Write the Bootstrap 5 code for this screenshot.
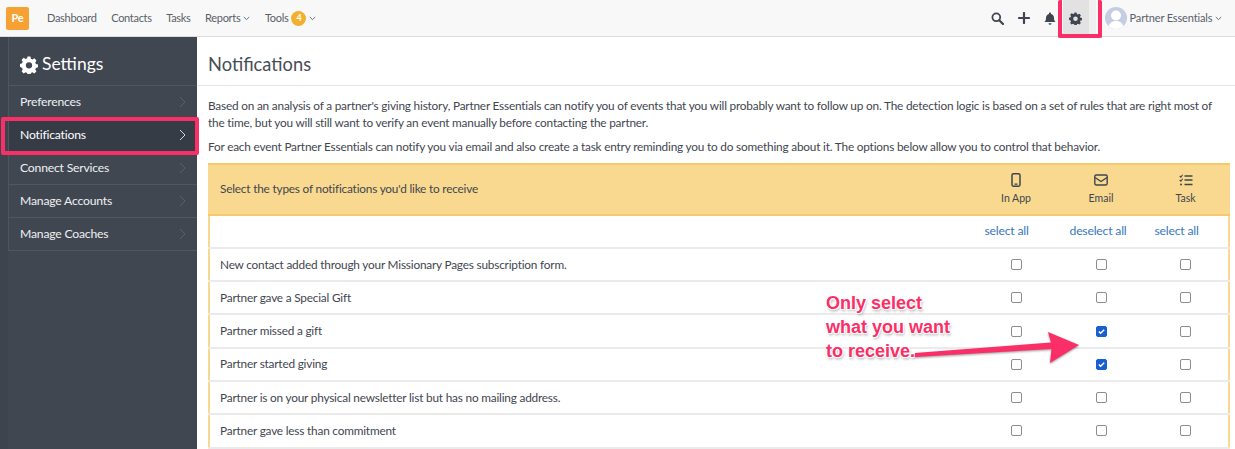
<!DOCTYPE html>
<html lang="en">
<head>
<meta charset="utf-8">
<title>Notifications</title>
<link href="https://cdn.jsdelivr.net/npm/bootstrap@5.3.0/dist/css/bootstrap.min.css" rel="stylesheet">
<style>
html,body{height:449px;overflow:hidden;}
body{font-family:Lato,"Noto Sans",sans-serif;font-size:11.8px;letter-spacing:-.19px;color:#3f4650;background:#fff;position:relative;}
.topbar{height:37px;background:#f8f8f8;border-bottom:1px solid #dcdcdc;padding:0 13px 0 6px;}
.logo-box{width:23px;height:23px;background:#f5a133;border-radius:2px;color:#fff;font-weight:700;font-size:11px;margin-right:18px;}
.top-link{color:#5a6068;font-size:11px;letter-spacing:-.3px;text-decoration:none;margin-right:14.5px;}
.top-link.wide-gap{margin-right:15px;}
.top-link.user-name{letter-spacing:-.15px;}
.count-pill{width:15px;height:15px;border-radius:50%;background:#f3b02e;color:#fff;font-size:9px;font-weight:700;margin:0 3px 0 3px;}
.tool-icon{width:26px;height:36px;color:#3f4650;}
.gear-cell{background:#e2e2e2;box-shadow:7px 0 0 #f0f0f0;margin-right:16px;}
.avatar{width:22px;height:22px;border-radius:50%;background:#c5cde2;overflow:hidden;margin-right:3px;}
.shell{height:412px;}
.side{width:197px;background:#404751;border-left:8px solid #3d444e;flex:none;}
.side-inner{border-left:1px solid #4d5560;}
.side-head{height:49px;color:#fff;font-size:17.5px;letter-spacing:0;padding:7px 0 0 11px;border-bottom:1px solid #4f5762;gap:4px;}
.side-item{height:33px;color:#eef0f2;font-size:12.2px;letter-spacing:-.2px;padding:0 11px;border-bottom:1px solid #4f5762;text-decoration:none;}
.side-item.on{background:#363c45;color:#fff;}
.main-pane{min-width:0;flex:1;}
.page-head{height:49px;border-bottom:1px solid #e6e6e6;padding:7px 0 0 11px;font-size:18.3px;letter-spacing:0;color:#474d55;}
.copy{padding:11px 5px 0 11px;line-height:17px;}
.copy p{margin:0 0 7px;}
.notify-table{margin:7.5px 5px 0 11px;border-collapse:collapse;width:1021.5px;table-layout:fixed;}
.notify-table td,.notify-table th{padding:0;border-bottom:2px solid #ebebeb;vertical-align:middle;font-weight:400;color:#3f4650;height:33.3px;}
.notify-table tr{border-left:2px solid #f8d98f;border-right:2px solid #f8d98f;}
.notify-table td:first-child{padding:0 0 0 10px;}
.notify-table thead th{background:#f8d98f;border-top:2px solid #f6c96b;border-bottom:2px solid #f6c96b;height:51px;}
.notify-table thead th:first-child{padding-left:10px;}
.notify-table thead th.col-mark{padding-top:2px;}
.col-mark{width:85px;text-align:center;}
.link-cell{text-align:left;padding-left:11px !important;}
.mark-label{display:block;font-size:10.5px;letter-spacing:0;margin-top:4px;}
.mark-svg{display:block;margin:0 auto;height:14px;}
.all-link{color:#3878c0;text-decoration:none;font-size:12.2px;letter-spacing:-.2px;}
.tick{appearance:none;display:block;margin:0 auto;width:11px;height:11px;border:1px solid #8d8d8d;border-radius:2px;background:#fff;}
.tick:checked{background:#1a5fd0;border-color:#1a5fd0;background-image:url("data:image/svg+xml,%3Csvg xmlns='http://www.w3.org/2000/svg' viewBox='0 0 10 10'%3E%3Cpath d='M2 5l2 2 4-4' fill='none' stroke='white' stroke-width='1.6'/%3E%3C/svg%3E");}
.hilite{position:absolute;border:4px solid #fb2f67;border-radius:2px;pointer-events:none;}
.hilite-nav{left:1058px;top:0;width:44px;height:38px;border-top:0;}
.hilite-side{left:1px;top:117px;width:198px;height:38px;}
.call-note{position:absolute;left:826px;top:291px;font:700 18px/24px "Liberation Sans",sans-serif;letter-spacing:0;color:#fb2f67;text-shadow:0 0 2px #fff,1px 1px 1px #fff,-1px -1px 1px #fff,1px -1px 1px #fff,-1px 1px 1px #fff,1px 2px 3px rgba(0,0,0,.4);white-space:nowrap;}
.call-arrow{position:absolute;left:905px;top:325px;filter:drop-shadow(0 1px 1px rgba(0,0,0,.4));}
</style>
</head>
<body>
<nav class="topbar d-flex align-items-center">
  <span class="logo-box d-flex align-items-center justify-content-center">Pe</span>
  <a class="top-link" href="#">Dashboard</a>
  <a class="top-link" href="#">Contacts</a>
  <a class="top-link" href="#">Tasks</a>
  <a class="top-link wide-gap" href="#">Reports <svg width="7" height="5" viewBox="0 0 7 5"><path d="M.8 1l2.7 2.6L6.2 1" fill="none" stroke="#6a7078"/></svg></a>
  <a class="top-link d-flex align-items-center" href="#">Tools <span class="count-pill d-flex align-items-center justify-content-center">4</span><svg width="7" height="5" viewBox="0 0 7 5"><path d="M.8 1l2.7 2.6L6.2 1" fill="none" stroke="#6a7078"/></svg></a>
  <span class="ms-auto tool-icon d-flex align-items-center justify-content-center">
    <svg width="13" height="13" viewBox="0 0 13 13"><circle cx="5.3" cy="5.3" r="3.9" fill="none" stroke="#3f4650" stroke-width="1.8"/><path d="M8.2 8.2l3.8 3.8" stroke="#3f4650" stroke-width="2.2" stroke-linecap="round"/></svg>
  </span>
  <span class="tool-icon d-flex align-items-center justify-content-center">
    <svg width="12" height="12" viewBox="0 0 12 12"><path d="M6 1v10M1 6h10" stroke="#3f4650" stroke-width="2.2" stroke-linecap="round"/></svg>
  </span>
  <span class="tool-icon d-flex align-items-center justify-content-center">
    <svg width="12" height="13" viewBox="0 0 12 13"><path d="M6 0.5c.6 0 1 .4 1 1v.4c2 .5 3 2 3 4 0 2.300.7 3.100 1.500 4H.5c.8-.9 1.500-1.700 1.500-4 0-2 1-3.500 3-4v-.4c0-.6.4-1 1-1zM4.500 11.200h3a1.500 1.500 0 0 1-3 0z" fill="#3f4650"/></svg>
  </span>
  <span class="tool-icon gear-cell d-flex align-items-center justify-content-center">
    <svg width="13" height="13" viewBox="0 0 16 16"><path fill-rule="evenodd" d="M6.700.5h2.600l.4 2 1.300.6 1.800-1 1.800 1.900-1 1.700.5 1.300 1.900.5v2.600l-1.900.5-.5 1.300 1 1.700-1.800 1.900-1.800-1-1.300.6-.4 2H6.700l-.4-2-1.300-.6-1.800 1-1.800-1.900 1-1.700-.5-1.300L0 9.600V7l1.900-.5.5-1.300-1-1.700L3.200 1.600l1.800 1 1.300-.6zM8 5.500a2.800 2.800 0 1 0 0 5.600 2.800 2.800 0 0 0 0-5.600z" fill="#3f4650"/></svg>
  </span>
  <span class="avatar"><svg width="22" height="22" viewBox="0 0 22 22"><circle cx="11" cy="8.500" r="5" fill="#fff"/><path d="M3 23c0-6 3.500-9 8-9s8 3 8 9z" fill="#fff"/></svg></span>
  <span class="top-link user-name m-0">Partner Essentials <svg width="7" height="5" viewBox="0 0 7 5"><path d="M.8 1l2.700 2.600L6.200 1" fill="none" stroke="#6a7078"/></svg></span>
</nav>
<div class="shell d-flex">
  <aside class="side">
    <div class="side-inner">
      <div class="side-head d-flex align-items-center">
        <svg width="18" height="18" viewBox="0 0 16 16"><path fill-rule="evenodd" d="M6.700.5h2.600l.4 2 1.300.6 1.800-1 1.800 1.900-1 1.700.5 1.300 1.900.5v2.600l-1.900.5-.5 1.300 1 1.700-1.800 1.900-1.800-1-1.300.6-.4 2H6.700l-.4-2-1.300-.6-1.800 1-1.800-1.900 1-1.700-.5-1.300L0 9.600V7l1.900-.5.5-1.300-1-1.700L3.200 1.600l1.800 1 1.300-.6zM8 5.500a2.800 2.800 0 1 0 0 5.600 2.800 2.800 0 0 0 0-5.600z" fill="#fff"/></svg>
        Settings
      </div>
      <a class="side-item d-flex align-items-center justify-content-between" href="#">Preferences <svg width="7" height="12" viewBox="0 0 7 12"><path d="M1 1l5 5-5 5" fill="none" stroke="#58606b" stroke-width="1"/></svg></a>
      <a class="side-item on d-flex align-items-center justify-content-between" href="#">Notifications <svg width="7" height="12" viewBox="0 0 7 12"><path d="M1 1l5 5-5 5" fill="none" stroke="#d5d8dc" stroke-width="1"/></svg></a>
      <a class="side-item d-flex align-items-center justify-content-between" href="#">Connect Services <svg width="7" height="12" viewBox="0 0 7 12"><path d="M1 1l5 5-5 5" fill="none" stroke="#58606b" stroke-width="1"/></svg></a>
      <a class="side-item d-flex align-items-center justify-content-between" href="#">Manage Accounts <svg width="7" height="12" viewBox="0 0 7 12"><path d="M1 1l5 5-5 5" fill="none" stroke="#58606b" stroke-width="1"/></svg></a>
      <a class="side-item d-flex align-items-center justify-content-between" href="#">Manage Coaches <svg width="7" height="12" viewBox="0 0 7 12"><path d="M1 1l5 5-5 5" fill="none" stroke="#58606b" stroke-width="1"/></svg></a>
    </div>
  </aside>
  <main class="main-pane">
    <div class="page-head d-flex align-items-center">Notifications</div>
    <div class="copy">
      <p>Based on an analysis of a partner's giving history, Partner Essentials can notify you of events that you will probably want to follow up on. The detection logic is based on a set of rules that are right most of the time, but you will still want to verify an event manually before contacting the partner.</p>
      <p>For each event Partner Essentials can notify you via email and also create a task entry reminding you to do something about it. The options below allow you to control that behavior.</p>
    </div>
    <table class="notify-table">
      <thead>
        <tr>
          <th>Select the types of notifications you'd like to receive</th>
          <th class="col-mark"><svg class="mark-svg" width="10" height="14" viewBox="0 0 10 14"><rect x="1" y=".8" width="8" height="12.400" rx="1.400" fill="none" stroke="#3f4650" stroke-width="1.500"/><rect x="3.500" y="10.500" width="3" height="1.300" fill="#3f4650"/></svg><span class="mark-label">In App</span></th>
          <th class="col-mark"><svg class="mark-svg" width="14" height="14" viewBox="0 -1 14 14"><rect x=".8" y="1" width="12.400" height="10" rx="1.400" fill="none" stroke="#3f4650" stroke-width="1.400"/><path d="M1 3.500l6 4 6-4" fill="none" stroke="#3f4650" stroke-width="1.400"/></svg><span class="mark-label">Email</span></th>
          <th class="col-mark"><svg class="mark-svg" width="14" height="14" viewBox="0 -1 14 14"><path d="M.7 2l1.200 1.200L3.600.8M.7 6l1.200 1.200L3.600 4.800" fill="none" stroke="#3f4650" stroke-width="1.100"/><circle cx="2" cy="10.500" r="1" fill="#3f4650"/><path d="M5.500 2h8M5.500 6h8M5.500 10.500h8" stroke="#3f4650" stroke-width="1.600"/></svg><span class="mark-label">Task</span></th>
        </tr>
      </thead>
      <tbody>
        <tr><td></td><td class="col-mark link-cell"><a class="all-link" href="#">select all</a></td><td class="col-mark link-cell"><a class="all-link" href="#">deselect all</a></td><td class="col-mark link-cell"><a class="all-link" href="#">select all</a></td></tr>
        <tr><td>New contact added through your Missionary Pages subscription form.</td><td><input class="tick" type="checkbox"></td><td><input class="tick" type="checkbox"></td><td><input class="tick" type="checkbox"></td></tr>
        <tr><td>Partner gave a Special Gift</td><td><input class="tick" type="checkbox"></td><td><input class="tick" type="checkbox"></td><td><input class="tick" type="checkbox"></td></tr>
        <tr><td>Partner missed a gift</td><td><input class="tick" type="checkbox"></td><td><input class="tick" type="checkbox" checked></td><td><input class="tick" type="checkbox"></td></tr>
        <tr><td>Partner started giving</td><td><input class="tick" type="checkbox"></td><td><input class="tick" type="checkbox" checked></td><td><input class="tick" type="checkbox"></td></tr>
        <tr><td>Partner is on your physical newsletter list but has no mailing address.</td><td><input class="tick" type="checkbox"></td><td><input class="tick" type="checkbox"></td><td><input class="tick" type="checkbox"></td></tr>
        <tr><td>Partner gave less than commitment</td><td><input class="tick" type="checkbox"></td><td><input class="tick" type="checkbox"></td><td><input class="tick" type="checkbox"></td></tr>
      </tbody>
    </table>
  </main>
</div>
<div class="hilite hilite-nav"></div>
<div class="hilite hilite-side"></div>
<div class="call-note">Only select<br>what you want<br>to receive.</div>
<svg class="call-arrow" width="180" height="45" viewBox="905 325 180 45"><path d="M915 353L1051 342.500L1048 332L1079 345L1050 363L1051.500 349L915 357z" fill="#fb2f67"/></svg>
</body>
</html>
